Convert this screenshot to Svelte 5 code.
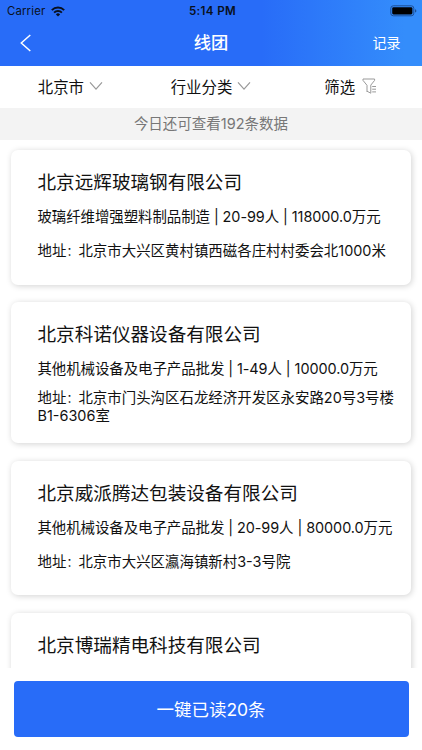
<script>
  const companies = [
    {
      name: '北京远辉玻璃钢有限公司',
      info: ['玻璃纤维增强塑料制品制造', '20-99人', '118000.0万元'],
      address: '北京市大兴区黄村镇西磁各庄村村委会北1000米'
    },
    {
      name: '北京科诺仪器设备有限公司',
      info: ['其他机械设备及电子产品批发', '1-49人', '10000.0万元'],
      address: '北京市门头沟区石龙经济开发区永安路20号3号楼B1-6306室',
      wrapped: true
    },
    {
      name: '北京威派腾达包装设备有限公司',
      info: ['其他机械设备及电子产品批发', '20-99人', '80000.0万元'],
      address: '北京市大兴区瀛海镇新村3-3号院'
    },
    { name: '北京博瑞精电科技有限公司', info: [], address: '' }
  ];
</script>

{#snippet chevron()}
  <svg class="chevron" width="14" height="10" viewBox="0 0 14 10" fill="none" stroke="#999" stroke-width="1.2">
    <path d="M1 1.3 7 8.2 13 1.3" />
  </svg>
{/snippet}

<div class="screen">
  <header>
    <div class="status">
      <div class="carrier">
        <span>Carrier</span>
        <svg width="14" height="11" viewBox="0 0 14 11" fill="none" stroke="#081020" stroke-width="1.9">
          <path d="M.8 4.1a8.8 8.8 0 0 1 12.4 0M3.1 6.6a5.5 5.5 0 0 1 7.8 0" />
          <path d="M4.9 8.4a3 3 0 0 1 4.2 0L7 10.6z" fill="#081020" stroke="none" />
        </svg>
      </div>
      <div class="time">5:14 PM</div>
      <div class="battery">
        <svg width="27" height="12" viewBox="0 0 27 12">
          <rect x=".8" y=".8" width="23" height="10" rx="2.5" fill="none" stroke="#1d4f96" stroke-width="1" />
          <rect x="2.2" y="2.2" width="20.2" height="7.2" rx="1.3" fill="#000" />
          <path d="M25 4.2v3.4q1.4-.4 1.4-1.7T25 4.2z" fill="#1d4f96" />
        </svg>
      </div>
    </div>
    <nav>
      <svg class="back" width="12" height="18" viewBox="0 0 12 18" fill="none" stroke="#fff" stroke-width="1.5">
        <path d="M10.3 1 1.3 9l9 8" />
      </svg>
      <h1>线团</h1>
      <span class="record">记录</span>
    </nav>
  </header>

  <div class="filters">
    <div class="filter">北京市{@render chevron()}</div>
    <div class="filter">行业分类{@render chevron()}</div>
    <div class="filter last">筛选
      <svg class="funnel" width="15" height="16" viewBox="0 0 15 16" fill="none" stroke="#999" stroke-width="1">
        <path d="M5 14V7.3L1 2.4V1h11.6v1.4L8.8 7.1v8.1L5 13.2M10.2 8.5H14M10.2 11.2H14M10.2 13.9H14" />
      </svg>
    </div>
  </div>

  <div class="hint">今日还可查看192条数据</div>

  <main>
    {#each companies as company}
      <article class:wrapped={company.wrapped}>
        <h2>{company.name}</h2>
        <p class="info">{company.info.join(' | ')}</p>
        {#if company.address}
          <p class="address">地址<span class="colon">：</span>{company.address}</p>
        {/if}
      </article>
    {/each}
  </main>

  <footer><button>一键已读20条</button></footer>
</div>

<style>
  :global(body) { background: #fff; }
  .screen {
    width: 422px;
    height: 750px;
    display: flex;
    flex-direction: column;
    overflow: hidden;
    background: #fff;
    color: #111;
    font-family: Inter, "Noto Sans CJK SC", sans-serif;
  }
  header {
    flex: none;
    height: 65.5px;
    background: linear-gradient(90deg, #286cf8 0%, #286cf8 62%, #348dfb 96%, #348dfb 100%);
  }
  .status {
    height: 22px;
    display: grid;
    grid-template-columns: 1fr auto 1fr;
    align-items: center;
    color: #081020;
    font-size: 11.3px;
  }
  .carrier { display: flex; align-items: center; gap: 6px; padding-left: 7px; letter-spacing: .2px; }
  .time { font-weight: 600; font-size: 11.6px; letter-spacing: .35px; padding-left: 3px; }
  .battery { display: flex; justify-content: flex-end; padding-right: 5px; }
  nav {
    height: 42px;
    display: grid;
    grid-template-columns: 1fr auto 1fr;
    align-items: center;
    color: #fff;
  }
  .back { margin-left: 20px; }
  h1 { margin: 0; font-size: 17.3px; font-weight: 500; line-height: 24px; }
  .record { justify-self: end; padding-right: 21.5px; font-size: 14px; line-height: 20px; }
  .filters {
    flex: none;
    box-sizing: border-box;
    height: 42px;
    padding-bottom: 2px;
    display: grid;
    grid-template-columns: repeat(3, 1fr);
    font-size: 15.4px;
  }
  .filter { display: flex; align-items: center; justify-content: center; white-space: nowrap; }
  .last { padding-right: 2px; }
  .chevron { margin-left: 5px; }
  .funnel { margin-left: 7px; }
  .hint {
    flex: none;
    height: 32.5px;
    line-height: 32px;
    background: #f3f3f3;
    color: #777;
    text-align: center;
    font-size: 14.5px;
  }
  main {
    flex: 1;
    min-height: 0;
    overflow: hidden;
    padding: 10px 11px 0;
    display: flex;
    flex-direction: column;
    gap: 17.5px;
  }
  article {
    flex: none;
    box-sizing: border-box;
    height: 134.5px;
    padding: 19px 12px 0 26.5px;
    border-radius: 7px;
    box-shadow: 1px 1px 6px rgba(0, 0, 0, .18);
    font-size: 14.45px;
  }
  article.wrapped { height: 141px; }
  h2 { margin: 0; font-size: 18.6px; font-weight: 400; line-height: 26px; }
  p { margin: 0; line-height: 17px; }
  .info { margin-top: 13px; min-height: 17px; white-space: nowrap; letter-spacing: -.07px; }
  .address { margin-top: 17px; }
  .wrapped .address { margin-top: 12px; }
  .colon { font-size: 12px; }
  footer { flex: none; height: 82px; box-sizing: border-box; padding: 13px 13.5px 0; background: #fff; }
  button {
    width: 100%;
    height: 55.5px;
    padding: 0 0 1px;
    border: 0;
    border-radius: 4px;
    background: #286cf8;
    color: #fff;
    font: inherit;
    font-size: 17.5px;
  }
</style>
